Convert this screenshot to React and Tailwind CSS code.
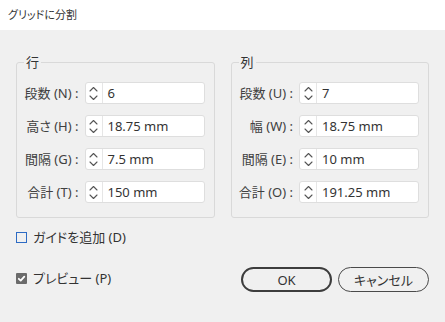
import React from 'react';

const gyou = [
  { label: '段数 (N) :', value: '6' },
  { label: '高さ (H) :', value: '18.75 mm' },
  { label: '間隔 (G) :', value: '7.5 mm' },
  { label: '合計 (T) :', value: '150 mm' },
];

const retsu = [
  { label: '段数 (U) :', value: '7' },
  { label: '幅 (W) :', value: '18.75 mm' },
  { label: '間隔 (E) :', value: '10 mm' },
  { label: '合計 (O) :', value: '191.25 mm' },
];

function Spinner() {
  return (
    <div className="w-[17px] h-full border-r border-[#e6e6e6] flex items-center justify-center">
      <svg width="9" height="15" viewBox="0 0 9 15" fill="none" stroke="#555" strokeWidth="1.1" strokeLinecap="round" strokeLinejoin="round">
        <path d="M1 5 L4.5 1.5 L8 5" />
        <path d="M1 10 L4.5 13.5 L8 10" />
      </svg>
    </div>
  );
}

function Field({ label, value }) {
  return (
    <div className="flex items-center justify-end gap-[6px]">
      <span className="text-[#404040] whitespace-nowrap">{label}</span>
      <div className="w-[120px] h-[22px] bg-white border border-[#dedede] rounded-[3px] flex items-center">
        <Spinner />
        <span className="pl-[5px] text-[#333]">{value}</span>
      </div>
    </div>
  );
}

function Group({ title, rows }) {
  return (
    <fieldset className="w-[199px] border border-[#d9d9d9] rounded-[3px] pl-[6px] pr-[9px] pb-[14px]">
      <legend className="px-[2px] ml-[1px] text-[13px] leading-[16px] text-[#333]">{title}</legend>
      <div className="flex flex-col gap-[11px] pt-[12px]">
        {rows.map(r => (
          <Field key={r.label} label={r.label} value={r.value} />
        ))}
      </div>
    </fieldset>
  );
}

export default function App() {
  return (
    <div className="w-[445px] h-[322px] overflow-hidden bg-[#f0f0f0] text-[#333] text-[13px] leading-[16px] font-['Noto_Sans','Noto_Sans_CJK_JP',sans-serif] [font-feature-settings:'palt']">
      <div className="h-[30px] bg-white flex items-center px-[8px] text-[11px]">
        グリッドに分割
      </div>

      <div className="px-[16px] pt-[24px]">
        <div className="flex gap-[16px]">
          <Group title="行" rows={gyou} />
          <Group title="列" rows={retsu} />
        </div>

        <div className="flex items-center gap-[6px] h-[16px] mt-[11px]">
          <span className="w-[11px] h-[11px] border border-[#2d6bc4]" />
          <span>ガイドを追加 (D)</span>
        </div>

        <div className="flex items-center justify-between mt-[22px]">
          <div className="flex items-center gap-[6px] mb-[3px]">
            <span className="w-[11px] h-[11px] bg-[#6b6b6b] rounded-[1px] flex items-center justify-center">
              <svg width="9" height="9" viewBox="0 0 9 9" fill="none" stroke="#fff" strokeWidth="1.8" strokeLinecap="round" strokeLinejoin="round">
                <path d="M1.8 4.8 L3.7 6.6 L7.3 2.6" />
              </svg>
            </span>
            <span>プレビュー (P)</span>
          </div>
          <div className="flex gap-[6px]">
            <button className="w-[91px] h-[25px] rounded-full border-[2.5px] border-[#3d3d3d] text-[#333]">
              OK
            </button>
            <button className="w-[91px] h-[25px] rounded-full border-[1.5px] border-[#4a4a4a] text-[#333]">
              キャンセル
            </button>
          </div>
        </div>
      </div>
    </div>
  );
}
